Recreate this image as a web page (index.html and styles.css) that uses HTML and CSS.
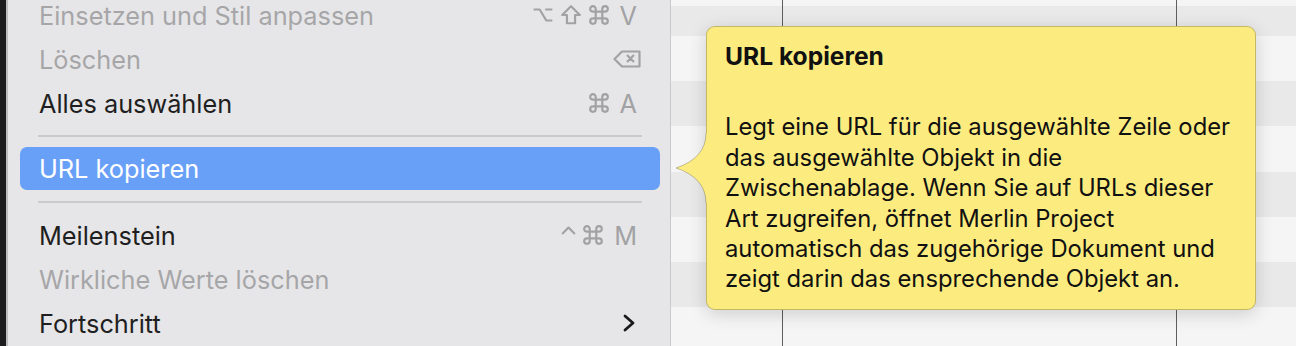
FILE: index.html
```html
<!DOCTYPE html>
<html lang="de">
<head>
<meta charset="utf-8">
<title>Menü</title>
<link rel="stylesheet" href="styles.css">
</head>
<body>
<div class="screen">
  <div class="edge"></div>
  <div class="menu">
    <div class="list">
      <div class="item disabled">
        <span class="label">Einsetzen und Stil anpassen</span>
        <span class="keys">
          <svg class="mod" viewBox="0 0 20 20"><path d="M1.5 5H7L13 15H18.5M12 5H18.5"/></svg>
          <svg class="mod" viewBox="0 0 20 20"><path d="M10 2L2 10H6.3V17.5H13.7V10H18Z"/></svg>
          <svg class="mod" viewBox="0 0 20 20"><path d="M7 7V4.5A2.5 2.5 0 1 0 4.5 7H15.5A2.5 2.5 0 1 0 13 4.5V15.5A2.5 2.5 0 1 0 15.5 13H4.5A2.5 2.5 0 1 0 7 15.5Z"/></svg>
          <span class="key">V</span>
        </span>
      </div>
      <div class="item disabled">
        <span class="label">Löschen</span>
        <span class="keys">
          <svg class="del" viewBox="0 0 28 18"><path d="M9 1.5H26.5V16.5H9L1.5 9Z M14 5L21 12M21 5L14 12"/></svg>
        </span>
      </div>
      <div class="item">
        <span class="label">Alles auswählen</span>
        <span class="keys">
          <svg class="mod" viewBox="0 0 20 20"><path d="M7 7V4.5A2.5 2.5 0 1 0 4.5 7H15.5A2.5 2.5 0 1 0 13 4.5V15.5A2.5 2.5 0 1 0 15.5 13H4.5A2.5 2.5 0 1 0 7 15.5Z"/></svg>
          <span class="key">A</span>
        </span>
      </div>
      <div class="sep"></div>
      <div class="item active">
        <span class="label">URL kopieren</span>
      </div>
      <div class="sep"></div>
      <div class="item">
        <span class="label">Meilenstein</span>
        <span class="keys">
          <svg class="mod ctrl" viewBox="0 0 16 20"><path d="M2 9L8 3L14 9"/></svg>
          <svg class="mod" viewBox="0 0 20 20"><path d="M7 7V4.5A2.5 2.5 0 1 0 4.5 7H15.5A2.5 2.5 0 1 0 13 4.5V15.5A2.5 2.5 0 1 0 15.5 13H4.5A2.5 2.5 0 1 0 7 15.5Z"/></svg>
          <span class="key">M</span>
        </span>
      </div>
      <div class="item disabled">
        <span class="label">Wirkliche Werte löschen</span>
      </div>
      <div class="item">
        <span class="label">Fortschritt</span>
        <span class="keys">
          <svg class="chev" viewBox="0 0 12 18"><path d="M2 2L10 9L2 16"/></svg>
        </span>
      </div>
    </div>
  </div>
  <div class="canvas">
    <div class="col col-a"></div>
    <div class="col col-b"></div>
    <div class="col col-c"></div>
  </div>

  <div class="tooltip">
    <svg class="arrow" viewBox="0 0 32 70">
      <path class="arrow-fill" d="M32 0H30Q30 25 0 35Q30 45 30 70H32Z"/>
      <path class="arrow-line" d="M30 0Q30 25 0 35Q30 45 30 70"/>
    </svg>
    <div class="tip-title">URL kopieren</div>
    <p class="tip-body">Legt eine URL für die ausgewählte Zeile oder<br>das ausgewählte Objekt in die<br>Zwischenablage. Wenn Sie auf URLs dieser<br>Art zugreifen, öffnet Merlin Project<br>automatisch das zugehörige Dokument und<br>zeigt darin das ensprechende Objekt an.</p>
  </div>
</div>
</body>
</html>
```

FILE: styles.css
```css
* { box-sizing: border-box; }

html, body {
  margin: 0;
  padding: 0;
  width: 1296px;
  height: 346px;
  overflow: hidden;
}

body {
  font-family: Inter, "Noto Sans", "DejaVu Sans", sans-serif;
  background: #f2f2f2;
}

.screen {
  position: relative;
  display: flex;
  width: 1296px;
  height: 346px;
  overflow: hidden;
}

.edge {
  width: 6px;
  flex: none;
  background: #1c1c1e;
}

.menu {
  width: 665px;
  flex: none;
  background: #e6e6e8;
  border-left: 2px solid #bdbdbf;
  border-right: 1px solid #c9c9cb;
}

.list {
  margin-top: -7px;
  display: flex;
  flex-direction: column;
}

.item {
  display: flex;
  align-items: center;
  justify-content: space-between;
  height: 44px;
  margin: 0 10px 0 12px;
  padding: 0 23px 0 19px;
  border-radius: 7px;
  font-size: 25.3px;
  color: #1f1f21;
}

.item.disabled { color: #a6a6a8; }

.item.active {
  background: #68a0f8;
  color: #ffffff;
  height: 43px;
  margin-bottom: 1px;
}

.sep {
  height: 2px;
  margin: 10px 28px 10px 30px;
  background: #cacacc;
}

.keys {
  display: flex;
  align-items: center;
  gap: 6px;
  color: #a2a2a4;
}

.mod {
  width: 22px;
  height: 22px;
  fill: none;
  stroke: #a2a2a4;
  stroke-width: 2;
  stroke-linejoin: round;
}

.mod.ctrl {
  width: 17px;
  margin-right: -1px;
}

.key {
  margin-left: 4px;
  font-size: 25.3px;
  color: #a2a2a4;
}

.del {
  width: 28px;
  height: 18px;
  margin-right: -4px;
  fill: none;
  stroke: #a2a2a4;
  stroke-width: 2.2;
  stroke-linejoin: round;
}

.chev {
  width: 12px;
  height: 18px;
  margin-right: 2px;
  fill: none;
  stroke: #1a1a1a;
  stroke-width: 2.8;
  stroke-linecap: round;
  stroke-linejoin: round;
}

.canvas {
  flex: 1;
  display: flex;
  background: repeating-linear-gradient(
    to bottom,
    #f5f5f5 0px,
    #f5f5f5 45.2px,
    #e9e9e9 45.2px,
    #e9e9e9 90.4px
  );
  background-position: 0 36px;
}

.col {
  height: 100%;
  flex: none;
}

.col-a {
  width: 112px;
  border-right: 1px solid #5e5e60;
}

.col-b {
  width: 394px;
  border-right: 1px solid #5e5e60;
}

.col-c { flex: 1; }

.tooltip {
  position: absolute;
  left: 706px;
  top: 26px;
  width: 550px;
  padding: 14px 16px 14px 18px;
  background: #fcec80;
  border: 1px solid rgba(0, 0, 0, 0.22);
  border-radius: 9px;
  box-shadow: 0 4px 18px rgba(0, 0, 0, 0.16);
  color: #111111;
  font-size: 23.8px;
  line-height: 30.4px;
}

.arrow {
  position: absolute;
  left: -31px;
  top: 106px;
  width: 32px;
  height: 70px;
  overflow: visible;
}

.arrow-fill { fill: #fcec80; }

.arrow-line {
  fill: none;
  stroke: rgba(0, 0, 0, 0.22);
  stroke-width: 1;
}

.tip-title {
  font-weight: 700;
  font-size: 24.6px;
}

.tip-body {
  margin: 41px 0 0 0;
  white-space: nowrap;
}
```
